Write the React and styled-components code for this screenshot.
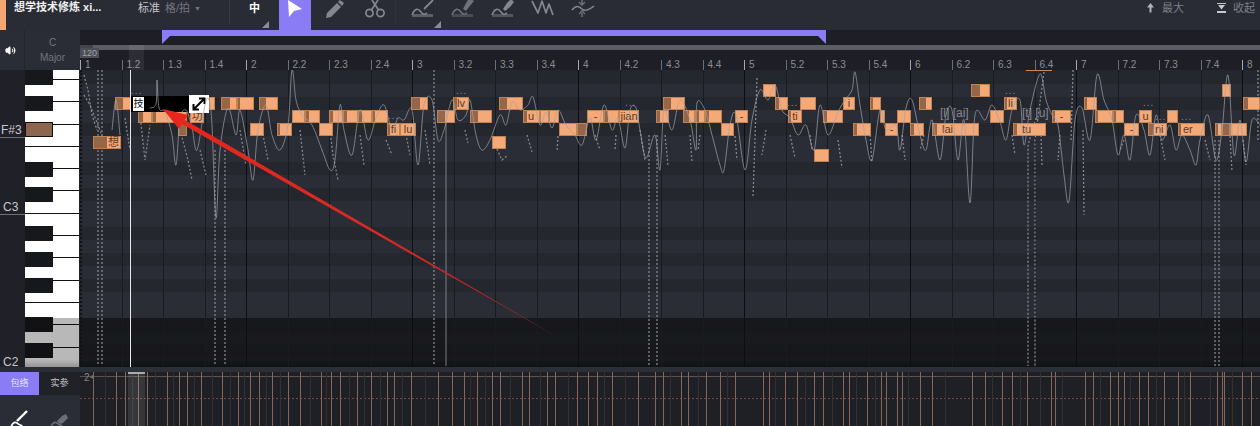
import React from 'react';
import styled, { createGlobalStyle } from 'styled-components';
import { Volume2 } from 'lucide-react';

const GlobalStyle = createGlobalStyle`
  html, body {
    margin: 0;
    background: #1e1f26;
    font-family: "Liberation Sans", "Noto Sans CJK SC", sans-serif;
  }
`;

const Page = styled.div`
  position: relative;
  width: 1260px;
  height: 426px;
  overflow: hidden;
  display: flex;
  flex-direction: column;
  background: #1e1f26;
`;

/* toolbar */
const Toolbar = styled.div`
  display: flex;
  height: 30px;
  flex: none;
  background: #2a2c35;
`;

const Swatch = styled.div`
  width: 6px;
  background: #f4a673;
`;

const Title = styled.div`
  width: 124px;
  padding: 0 0 0 8px;
  color: #f0f0f0;
  font-size: 11px;
  font-weight: 700;
  line-height: 15px;
  white-space: nowrap;
`;

const GridPick = styled.div`
  width: 92px;
  color: #c4c5c9;
  font-size: 11px;
  line-height: 16px;
  white-space: nowrap;
  border-right: 1px solid #363842;
  height: 24px;
  box-sizing: border-box;
`;

const Dim = styled.span`
  color: #75777f;
  margin-left: 5px;
`;

const DropMark = styled.span`
  color: #75777f;
  margin-left: 4px;
  font-size: 7px;
  vertical-align: 1px;
`;

const LangCell = styled.div`
  position: relative;
  width: 49px;
  text-align: center;
  color: #fff;
  font-size: 11px;
  font-weight: 700;
  line-height: 16px;
`;

const Corner = styled.i`
  position: absolute;
  right: ${p => p.$right}px;
  bottom: 2px;
  width: 7px;
  height: 7px;
  background: #8a8c92;
  clip-path: polygon(100% 0, 100% 100%, 0 100%);
`;

const SelectTool = styled.div`
  width: 32px;
  background: #8a7cf4;
  display: flex;
  justify-content: center;
`;

const ToolGroup = styled.div`
  display: flex;
  padding-left: ${p => p.$pad}px;
  margin-right: 3px;
  border-right: ${p => (p.$line ? '1px solid #31333c' : 'none')};
  height: 24px;
`;

const ToolCell = styled.div`
  position: relative;
  width: 40px;
  height: 30px;
  display: flex;
  justify-content: center;
  color: #85878e;
`;

const Grow = styled.div`
  flex: 1;
`;

const SideAction = styled.div`
  display: flex;
  gap: 7px;
  width: ${p => p.$w}px;
  color: #7d7f86;
  font-size: 11px;
  line-height: 16px;
`;

const ActionIcon = styled.svg`
  width: 9px;
  height: 16px;
  flex: none;
`;

/* editor */
const Editor = styled.div`
  display: grid;
  grid-template-columns: 80px 1180px;
  grid-template-rows: 40px 297px 59px;
  flex: 1;
`;

const KeyHeader = styled.div`
  display: flex;
  background: #2b2d36;
`;

const Mute = styled.div`
  width: 25px;
  padding-right: 3px;
  box-sizing: border-box;
  display: flex;
  align-items: center;
  justify-content: center;
  color: #fff;
  border-right: 1px solid #24262d;
`;

const Scale = styled.div`
  flex: 1;
  padding-top: 5px;
  text-align: center;
  color: #74767e;
  font-size: 10px;
  line-height: 15px;
`;

const TimeHead = styled.div`
  position: relative;
  display: flex;
  flex-direction: column;
  background: #1e1f26;
`;

const LoopLane = styled.div`
  height: 15px;
  padding-left: 82px;
  flex: none;
`;

const LoopBar = styled.div`
  width: 664px;
  height: 14px;
  background: #8a7cf4;
  clip-path: polygon(0 0, 100% 0, 100% 100%, calc(100% - 8px) 6px, 8px 6px, 0 100%);
`;

const ScrollBar = styled.div`
  height: 5px;
  flex: none;
  background: linear-gradient(90deg, #43454c 13px, #5b5d63 13px);
`;

const Ruler = styled.div`
  flex: 1;
  display: flex;
  align-items: flex-end;
`;

const Beat = styled.div`
  flex: 0 0 41.5px;
  box-sizing: border-box;
  height: 10px;
  padding-left: 4px;
  border-left: 1px solid ${p => (p.$bar ? '#a6a8ad' : '#6d6f76')};
  color: #8b8d93;
  font-size: 10px;
  line-height: 10px;
`;

const Tempo = styled.div`
  position: absolute;
  left: 0;
  top: 18px;
  padding: 0 2px;
  background: #4d4f57;
  color: #a0a2a8;
  font-size: 9px;
  line-height: 10px;
`;

const PlayColumn = styled.div`
  position: absolute;
  left: 49px;
  top: 15px;
  bottom: 0;
  width: 15px;
  background: rgba(255, 255, 255, 0.07);
`;

const Keys = styled.div`
  position: relative;
  display: flex;
  background: #202128;
`;

const Gutter = styled.div`
  width: 25px;
  flex: none;
`;

const KeyName = styled.div`
  position: absolute;
  left: 0;
  top: ${p => p.$top}px;
  width: 25px;
  height: 15px;
  padding-left: ${p => p.$pad}px;
  box-sizing: border-box;
  border-bottom: ${p => (p.$rule ? '1px solid #6c6e75' : 'none')};
  color: #c6c7cb;
  font-size: 12px;
  line-height: 14px;
  white-space: nowrap;
`;

const Piano = styled.div`
  position: relative;
  width: 54px;
  overflow: hidden;
  background: #fff;
  padding-top: 9px;
  box-sizing: border-box;
`;

const WhiteKey = styled.div`
  height: 22.3px;
  box-sizing: border-box;
  border-top: 1.5px solid #111216;
`;

const BlackKey = styled.div`
  position: absolute;
  left: 0;
  top: ${p => p.$top}px;
  width: 28px;
  height: 15px;
  box-sizing: border-box;
  background: ${p => (p.$on ? '#8d6650' : '#17181c')};
  border: ${p => (p.$on ? '1px solid #121214' : 'none')};
`;

const PianoShade = styled.div`
  position: absolute;
  left: 0;
  right: 0;
  top: 248px;
  bottom: 0;
  background: linear-gradient(rgba(0, 0, 0, 0.28) 85%, rgba(0, 0, 0, 0.42));
`;

const Roll = styled.div`
  position: relative;
  overflow: hidden;
  background: #25272f;
`;

const Lanes = styled.div`
  display: flex;
  flex-direction: column;
  padding-top: 1px;
`;

const Lane = styled.div`
  flex: 0 0 13px;
  background: ${p => (p.$black ? '#25272e' : '#2a2c36')};
`;

const RollShade = styled.div`
  position: absolute;
  left: 0;
  right: 0;
  top: 248px;
  bottom: 0;
  background: linear-gradient(rgba(18, 18, 20, 0.72) 85%, rgba(14, 14, 16, 0.9));
`;

const BarGrid = styled.div`
  position: absolute;
  inset: 0;
  display: flex;
`;

const BarLine = styled.div`
  flex: 0 0 41.5px;
  box-sizing: border-box;
  border-left: ${p => (p.$first ? '2px dotted #101114' : `1px solid ${p.$bar ? '#0d0e11' : '#1a1b20'}`)};
`;

const Note = styled.div`
  position: absolute;
  left: ${p => p.$x - 80}px;
  top: ${p => 14 + p.$row * 13}px;
  width: ${p => p.$w}px;
  height: 13px;
  box-sizing: border-box;
  padding-left: ${p => p.$indent}px;
  border: 1px solid #c08354;
  background: linear-gradient(90deg, #96664b ${p => p.$d}px, #f5a978 ${p => p.$d}px);
  color: #573a29;
  font-size: 11px;
  line-height: 11px;
  text-align: ${p => (p.$indent ? 'left' : 'center')};
  white-space: nowrap;
`;

const GhostText = styled.div`
  position: absolute;
  left: ${p => p.$x - 80}px;
  top: ${p => p.$y - 70}px;
  color: #85878e;
  font-size: ${p => p.$size}px;
  letter-spacing: ${p => (p.$size < 12 ? 1 : 0)}px;
  line-height: 11px;
  white-space: nowrap;
`;

const PitchOverlay = styled.svg`
  position: absolute;
  inset: 0;
  width: 1180px;
  height: 297px;
`;

const PitchLine = styled.path`
  fill: none;
  stroke: ${p => (p.$dash ? '#84868d' : 'rgba(160, 162, 170, 0.7)')};
  stroke-width: ${p => (p.$dash ? 1.3 : 1)};
  stroke-dasharray: ${p => (p.$dash ? '2 2' : 'none')};
`;

const Selected = styled.div`
  position: absolute;
  left: 51px;
  top: 26px;
  width: 58px;
  height: 16px;
  background: #000;
  display: flex;
  align-items: center;
  padding-left: 2px;
  box-sizing: border-box;
`;

const Char = styled.div`
  width: 11px;
  height: 14px;
  background: #fff;
  color: #111;
  font-size: 10px;
  line-height: 14px;
  text-align: center;
`;

const ExpandButton = styled.div`
  position: absolute;
  left: 109px;
  top: 25px;
  width: 20px;
  height: 18px;
  background: #fff;
  display: flex;
  align-items: center;
  justify-content: center;
`;

const PlayLine = styled.div`
  position: absolute;
  left: 50px;
  top: 0;
  bottom: 0;
  width: 1px;
  background: #e8e8e8;
`;

const PitchMark = styled.div`
  position: absolute;
  left: 946px;
  top: 0;
  width: 26px;
  height: 1px;
  background: #c98a60;
`;

const CurveTabs = styled.div`
  display: flex;
  flex-direction: column;
  background: #2b2d36;
`;

const TabRow = styled.div`
  display: flex;
  height: 23px;
  margin-top: 5px;
  background: #212228;
`;

const Tab = styled.div`
  width: ${p => p.$w}px;
  text-align: center;
  background: ${p => (p.$on ? '#8a7cf4' : 'transparent')};
  color: ${p => (p.$on ? '#e6e3ff' : '#c4c5c9')};
  font-size: 9px;
  line-height: 23px;
`;

const BrushRow = styled.div`
  display: flex;
  gap: 20px;
  padding: 15px 0 0 9px;
  overflow: hidden;
  flex: 1;
`;

const Envelope = styled.div`
  position: relative;
  display: flex;
  flex-direction: column;
  background: #1f2025;
`;

const EnvelopeTop = styled.div`
  height: 5px;
  flex: none;
  background: #2b2f38;
`;

const EnvelopeChart = styled.svg`
  width: 1180px;
  height: 54px;
`;

const EnvelopeLabel = styled.div`
  position: absolute;
  left: 4px;
  top: 5px;
  color: #85878d;
  font-size: 10px;
  line-height: 12px;
`;

const EnvelopePlay = styled.div`
  position: absolute;
  left: 48px;
  top: 5px;
  bottom: 0;
  width: 17px;
  background: linear-gradient(#a9abaf 2px, rgba(255, 255, 255, 0.1) 2px);
`;

const ArrowOverlay = styled.svg`
  position: absolute;
  left: 0;
  top: 0;
  width: 1260px;
  height: 426px;
  pointer-events: none;
`;

const beats = [];
for (let bar = 1; bar <= 8; bar++) {
  [0, 2, 3, 4].forEach(b => beats.push(b === 0 ? String(bar) : `${bar}.${b}`));
}
const shownBeats = beats.slice(0, 29);

const blackPattern = [0, 2, 4, 7, 9];
const lanes = Array.from({ length: 23 }, (_, i) => blackPattern.includes(i % 12));
const whiteKeys = Array.from({ length: 14 }, (_, i) => i);
const blackKeys = [0, 26, 52, 92, 117, 156, 182, 208, 247, 273];

// [start, end, row, lyric, dark part, text indent]
const notes = [
  [763, 776, 0], [971, 990, 0, '', 8], [1222, 1231, 0],
  [115, 131, 1, '', 7], [209, 215, 1], [221, 237, 1, '', 8], [237, 254, 1, '', 2], [259, 278, 1, '', 6],
  [411, 428, 1, '', 8], [453, 469, 1, 'lv', 3], [499, 523, 1, '', 7], [663, 685, 1, '', 7], [775, 788, 1, '', 3],
  [800, 816, 1], [843, 855, 1, 'i'], [870, 881, 1, '', 2], [919, 932, 1, '', 6], [1004, 1017, 1, 'li', 2],
  [1084, 1097, 1, '', 2], [1243, 1260, 1, '', 4],
  [138, 152, 2, '', 4], [152, 187, 2, '', 3], [190, 204, 2, '功'], [292, 305, 2], [305, 320, 2, '', 3],
  [329, 343, 2, '', 3], [343, 358, 2, '', 3], [358, 372, 2, '', 3], [372, 388, 2, '', 2], [437, 455, 2, '', 7],
  [470, 492, 2, '', 7], [523, 540, 2, 'u', 3, 4], [540, 549, 2], [549, 559, 2], [587, 604, 2, '-'], [604, 619, 2, '', 3],
  [619, 639, 2, 'jian'], [656, 669, 2, '', 3], [683, 695, 2, '', 5], [695, 705, 2, '', 3], [705, 722, 2, '', 3],
  [735, 748, 2, '-'], [788, 802, 2, 'ti', 2], [823, 843, 2, '', 3], [880, 885, 2], [897, 911, 2],
  [990, 1004, 2], [1052, 1071, 2, '-', 2], [1095, 1113, 2, '', 2], [1113, 1124, 2, '', 2], [1139, 1152, 2, 'u'],
  [1167, 1178, 2],
  [178, 187, 3, '', 9], [250, 264, 3], [277, 292, 3, '', 2], [319, 333, 3], [387, 400, 3, 'fi', 2], [400, 416, 3, 'lu'],
  [559, 577, 3], [577, 587, 3, '', 10], [721, 734, 3], [853, 871, 3, '', 3], [885, 898, 3, '-'], [910, 924, 3, '', 3],
  [932, 979, 3, 'lai', 4, 9], [1013, 1046, 3, 'tu', 3, 8], [1124, 1139, 3, '-'], [1148, 1167, 3, 'ni', 5, 6],
  [1178, 1205, 3, 'er', 2, 4], [1215, 1222, 3, '', 2], [1222, 1230, 3, '', 8], [1230, 1247, 3],
  [93, 121, 4, '想', 13, 14], [492, 506, 4], [814, 829, 5],
];

const ghosts = [
  [131, 85, '...', 10], [456, 85, '...', 10], [625, 97, '...', 10], [787, 97, '...', 10], [1005, 85, '...', 10], [1143, 97, '...', 10],
  [388, 110, '...', 10], [1155, 111, '...', 10], [1181, 111, '...', 10], [940, 108, '[l] [ai]', 12], [1022, 108, '[t] [u]', 12],
];

const pitch = [
  '150,108 156,104 157,80 159,108 165,112 172,135 176,165 180,120 186,110 192,128 197,150 205,105 209,100 212,125 216,218 220,150 228,108 236,135 240,110 248,150 253,180 258,130 266,105 272,135 280,150 288,125 292,70 296,100 302,115 312,125 322,150 330,170 335,160 340,105 344,130 352,155 360,110 368,140 376,118 384,105 392,130 398,118 404,120 412,110 418,165 424,105 432,100 438,140 444,130 452,100 458,120 466,115 470,100 476,135 482,150 490,140 500,115 506,125 512,102 520,110 528,105 533,97 540,125 546,112 552,128 558,110 566,125 575,135 582,145 590,118 596,140 604,105 612,130 618,118 625,148 630,110 636,108 640,130 646,158 655,135 660,170 664,110 672,130 680,100 690,120 696,150 697,103 705,110 712,135 720,165 724,170 730,125 736,115 745,170 752,120 760,90 768,100 775,85 782,110 790,118 798,135 806,125 814,150 820,105 828,135 838,112 845,100 852,90 855,72 860,105 866,140 872,160 880,110 886,130 896,125 900,150 906,108 912,100 920,135 926,150 932,120 940,160 946,115 952,110 958,160 964,120 970,203 975,115 985,120 992,105 1000,122 1006,140 1012,110 1020,100 1024,145 1030,110 1040,74 1046,100 1052,115 1058,125 1064,175 1069,201 1075,120 1082,108 1090,140 1097,75 1104,100 1112,120 1118,155 1124,135 1130,160 1136,115 1144,130 1150,155 1156,115 1162,140 1170,125 1176,150 1182,135 1190,150 1196,165 1200,140 1208,115 1216,160 1222,130 1228,75 1234,155 1240,120 1246,162 1252,120 1260,125',
  '112,130 116,100 120,135',
  '446,110 446,366',
];

const pitchDots = [
  '84,75 88,90 92,115 97,130', '84,95 90,105 100,130 105,145', '125,118 130,150', '140,115 145,160 150,125',
  '180,130 188,160 192,180', '200,150 206,175', '240,130 246,165', '262,130 268,160', '300,130 305,175',
  '330,130 333,155 338,180', '360,135 364,165', '386,140 392,155', '405,130 410,155', '425,130 430,165',
  '465,130 468,143', '497,149 502,160 508,155', '527,135 532,152', '558,136 557,152', '595,135 600,150',
  '616,135 615,150', '640,130 645,160', '665,135 668,165', '690,135 692,162', '700,135 698,150',
  '735,136 737,160', '766,130 762,155', '790,135 795,158', '810,135 812,150', '838,140 842,168', '870,135 872,162',
  '902,135 905,160', '924,135 920,150', '1012,135 1015,155', '1041,135 1042,165', '1060,135 1058,160',
  '1124,140 1120,150', '1160,135 1165,160', '1205,140 1210,160', '1230,136 1232,172', '1243,140 1246,165',
  '98,70 98,366', '102,70 102,366', '215,150 215,366', '225,150 225,366', '434,70 434,366', '649,135 649,366',
  '657,135 657,366', '757,78 753,198', '1044,72 1035,140 1035,366', '1036,118 1028,145 1028,366',
  '1073,70 1071,142', '1083,130 1084,215', '1215,140 1215,366', '1219,140 1219,366', '1258,70 1258,140',
];

const envelope = [
  93, 116, 125, 138, 147, 167, 179, 187, 201, 222, 238, 250, 259, 272, 288, 300, 321, 331, 340, 357, 371, 387, 394, 411,
  438, 452, 464, 477, 492, 500, 522, 529, 547, 555, 577, 588, 597, 612, 638, 655, 663, 681, 688, 706, 720, 735, 763, 769,
  785, 797, 814, 823, 843, 849, 867, 881, 886, 897, 902, 920, 932, 972, 985, 1002, 1012, 1027, 1051, 1055, 1085, 1093,
  1110, 1118, 1124, 1139, 1148, 1164, 1178, 1190, 1217, 1222, 1224, 1242, 1251,
];
const envelopeFaint = [
  105, 132, 155, 173, 194, 212, 230, 244, 266, 280, 310, 326, 349, 364, 380, 402, 425, 470, 485, 510, 540, 568, 604, 625, 670,
  698, 727, 775, 805, 832, 856, 875, 908, 945, 992, 1020, 1040, 1062, 1100, 1130, 1156, 1184, 1210, 1232,
];

// Catmull-Rom through the sampled pitch points
function smoothPath(points) {
  const pts = points.split(' ').map(s => s.split(',').map(Number));
  if (pts.length < 3) return `M${pts.map(p => p.join(' ')).join(' L')}`;
  let d = `M${pts[0][0]} ${pts[0][1]}`;
  for (let i = 0; i < pts.length - 1; i++) {
    const p0 = pts[i - 1] || pts[i];
    const p1 = pts[i];
    const p2 = pts[i + 1];
    const p3 = pts[i + 2] || p2;
    const c1x = p1[0] + (p2[0] - p0[0]) / 6;
    const c1y = p1[1] + (p2[1] - p0[1]) / 6;
    const c2x = p2[0] - (p3[0] - p1[0]) / 6;
    const c2y = p2[1] - (p3[1] - p1[1]) / 6;
    d += ` C${c1x} ${c1y} ${c2x} ${c2y} ${p2[0]} ${p2[1]}`;
  }
  return d;
}

function PencilCurve({ color, variant }) {
  return (
    <svg width="24" height="20" viewBox="0 0 24 20" fill="none">
      <rect x="1" y="14" width="21" height="3" fill={color} opacity={variant === 0 ? 0.55 : 0.45} />
      <path d="M1 15 C4 8 7 8 10 12 S14 14 16 13" stroke={color} strokeWidth="1.6" />
      {variant === 0 && <path d="M13 9 L22 0" stroke={color} strokeWidth="1.8" />}
      {variant === 1 && <path d="M12 9 L14 5 L18 -2 L23 1 L18 7 L15 11 Z" fill={color} />}
      {variant === 2 && <path d="M12 9 L16 3 L20 -1 L23 2 L19 7 L14 11 Z" fill={color} />}
    </svg>
  );
}

function BrushIcon({ color, fillHead }) {
  return (
    <svg width="20" height="24" viewBox="0 0 20 24" fill="none">
      <path d="M1 19 C3 14 5 11 8 13 C10 15 12 15 13 16 L17 20" stroke={color} strokeWidth="1.7" />
      {fillHead
        ? <path d="M8 11 L13 6 L17 4 L19 8 L14 13 L11 14 Z" fill={color} />
        : <path d="M8 11 L18 1" stroke={color} strokeWidth="2.4" />}
    </svg>
  );
}

export default function App() {
  return (
    <Page>
      <GlobalStyle />
      <Toolbar>
        <Swatch />
        <Title>想学技术修炼 xi...</Title>
        <GridPick>标准<Dim>格/拍</Dim><DropMark>▼</DropMark></GridPick>
        <LangCell>中<Corner $right={10} /></LangCell>
        <SelectTool>
          <svg width="16" height="18" viewBox="0 0 16 18">
            <path d="M1 0 L15 9 L7 11 L2 17 Z" fill="#fff" />
          </svg>
        </SelectTool>
        <ToolGroup $pad={4} $line>
          <ToolCell>
            <svg width="20" height="18" viewBox="0 0 20 18" fill="currentColor">
              <path d="M2 13 L12 3 L16 7 L6 17 L1 18 Z" />
              <path d="M13 2 L15 0 L19 3 L17 6 Z" />
            </svg>
          </ToolCell>
          <ToolCell>
            <svg width="20" height="18" viewBox="0 0 20 18" fill="none" stroke="currentColor" strokeWidth="1.7">
              <circle cx="4.5" cy="13" r="3.6" />
              <circle cx="15.5" cy="13" r="3.6" />
              <path d="M6.5 10 L13 0 M13.5 10 L7 0" />
            </svg>
          </ToolCell>
        </ToolGroup>
        <ToolGroup $pad={4}>
          <ToolCell><PencilCurve color="#85878e" variant={0} /><Corner $right={2} /></ToolCell>
          <ToolCell><PencilCurve color="#6f7178" variant={1} /></ToolCell>
          <ToolCell><PencilCurve color="#85878e" variant={2} /></ToolCell>
          <ToolCell>
            <svg width="24" height="18" viewBox="0 0 24 18" fill="none" stroke="currentColor" strokeWidth="1.7" strokeLinejoin="round">
              <path d="M1 1 L7 13 L11 1 L15 13 L18 4 L22 15" />
            </svg>
          </ToolCell>
          <ToolCell>
            <svg width="24" height="18" viewBox="0 0 24 18" fill="none" stroke="currentColor" strokeWidth="1.6">
              <path d="M1 10 C5 5 8 6 11 9 S18 10 23 6" />
              <path d="M11 0 V4 M8 2 L11 5 L14 2 M11 17 V13 M8 14 L11 11 L14 14" opacity="0.7" />
            </svg>
          </ToolCell>
        </ToolGroup>
        <Grow />
        <SideAction $w={71}>
          <ActionIcon viewBox="0 0 9 16" fill="#b0b2b6">
            <path d="M4.5 3 L8 7.5 H5.5 V12.5 H3.5 V7.5 H1 Z" />
          </ActionIcon>
          最大
        </SideAction>
        <SideAction $w={43}>
          <ActionIcon viewBox="0 0 9 16" fill="#c8c9cc">
            <path d="M0 3 H9 V4 H0 Z M1 5 H8 L4.5 9.5 Z M0 11 H9 V13 H0 Z" />
          </ActionIcon>
          收起
        </SideAction>
      </Toolbar>

      <Editor>
        <KeyHeader>
          <Mute><Volume2 size={11} fill="#fff" strokeWidth={2} /></Mute>
          <Scale>C<br />Major</Scale>
        </KeyHeader>
        <TimeHead>
          <LoopLane><LoopBar /></LoopLane>
          <ScrollBar />
          <Ruler>
            {shownBeats.map((b, i) => <Beat key={b} $bar={i % 4 === 0}>{b}</Beat>)}
          </Ruler>
          <Tempo>120</Tempo>
          <PlayColumn />
        </TimeHead>

        <Keys>
          <Gutter />
          <KeyName $top={53} $pad={1} $rule>F#3</KeyName>
          <KeyName $top={130} $pad={3} $rule>C3</KeyName>
          <KeyName $top={285} $pad={3}>C2</KeyName>
          <Piano>
            {whiteKeys.map(k => <WhiteKey key={k} />)}
            {blackKeys.map(top => <BlackKey key={top} $top={top} $on={top === 52} />)}
            <PianoShade />
          </Piano>
        </Keys>

        <Roll>
          <Lanes>
            {lanes.map((black, i) => <Lane key={i} $black={black} />)}
          </Lanes>
          <RollShade />
          <BarGrid>
            {shownBeats.map((b, i) => <BarLine key={b} $first={i === 0} $bar={i % 4 === 0} />)}
          </BarGrid>
          <PitchMark />
          <PitchOverlay viewBox="80 70 1180 297">
            {pitchDots.map(p => <PitchLine key={p} d={`M${p.replace(/ /g, ' L').replace(/,/g, ' ')}`} $dash />)}
          </PitchOverlay>
          {notes.map(([a, b, row, text, dark, indent]) => (
            <Note key={`${a}-${row}`} $x={a} $w={b - a} $row={row} $d={dark || 0} $indent={indent || 0}>{text}</Note>
          ))}
          {ghosts.map(([x, y, text, size]) => <GhostText key={x} $x={x} $y={y} $size={size}>{text}</GhostText>)}
          <Selected><Char>技</Char></Selected>
          <ExpandButton>
            <svg width="16" height="16" viewBox="0 0 16 16" fill="none" stroke="#000" strokeWidth="2">
              <path d="M3 13 L13 3 M8 2.5 H13.5 V8 M2.5 8 V13.5 H8" />
            </svg>
          </ExpandButton>
          <PitchOverlay viewBox="80 70 1180 297">
            {pitch.map(p => <PitchLine key={p} d={smoothPath(p)} />)}
          </PitchOverlay>
          <PlayLine />
        </Roll>

        <CurveTabs>
          <TabRow>
            <Tab $w={39} $on>包络</Tab>
            <Tab $w={41}>实参</Tab>
          </TabRow>
          <BrushRow>
            <BrushIcon color="#fff" />
            <BrushIcon color="#6c6e76" fillHead />
          </BrushRow>
        </CurveTabs>
        <Envelope>
          <EnvelopeTop />
          <EnvelopeChart viewBox="80 372 1180 54">
            <line x1="80" x2="1260" y1="376.5" y2="376.5" stroke="#5f504b" strokeWidth="1" />
            <line x1="80" x2="1260" y1="398.5" y2="398.5" stroke="#7d473f" strokeWidth="1" strokeDasharray="2 2" />
            {envelopeFaint.map(x => <line key={x} x1={x + 0.5} x2={x + 0.5} y1="372" y2="426" stroke="#34302f" strokeWidth="1" />)}
            {envelope.map(x => <line key={x} x1={x + 0.5} x2={x + 0.5} y1="372" y2="426" stroke="#866757" strokeWidth="1" />)}
          </EnvelopeChart>
          <EnvelopeLabel>2⁴</EnvelopeLabel>
          <EnvelopePlay />
        </Envelope>
      </Editor>

      <ArrowOverlay viewBox="0 0 1260 426">
        <defs>
          <linearGradient id="arrowFade" gradientUnits="userSpaceOnUse" x1="163" y1="110" x2="568" y2="343">
            <stop offset="0" stopColor="#e8261c" />
            <stop offset="0.62" stopColor="#d42a24" />
            <stop offset="0.88" stopColor="#8a2826" />
            <stop offset="1" stopColor="#5a2222" stopOpacity="0.35" />
          </linearGradient>
        </defs>
        <polygon points="163,109 188,115 185,120 568,343 182,124 179,129" fill="url(#arrowFade)" />
      </ArrowOverlay>
    </Page>
  );
}
